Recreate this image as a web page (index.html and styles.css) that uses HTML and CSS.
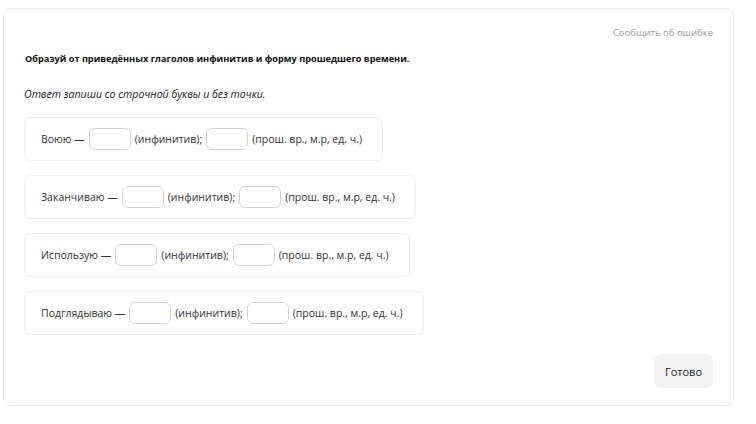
FILE: index.html
```html
<!DOCTYPE html>
<html lang="ru">
<head>
    <meta charset="UTF-8">
    <meta name="viewport" content="width=device-width, initial-scale=1.0">
    <title>Задание</title>
    <link rel="stylesheet" href="styles.css">
</head>
<body>
    <div class="card">
        <div class="report">Сообщить об ошибке</div>

        <div class="task">Образуй от приведённых глаголов инфинитив и форму прошедшего времени.</div>
        <div class="hint">Ответ запиши со строчной буквы и без точки.</div>

        <div class="rows">
            <div class="row">
                <span>Воюю —</span>
                <input type="text" class="field">
                <span>(инфинитив);</span>
                <input type="text" class="field">
                <span>(прош. вр., м.р, ед. ч.)</span>
            </div>
            <div class="row">
                <span>Заканчиваю —</span>
                <input type="text" class="field">
                <span>(инфинитив);</span>
                <input type="text" class="field">
                <span>(прош. вр., м.р, ед. ч.)</span>
            </div>
            <div class="row">
                <span>Использую —</span>
                <input type="text" class="field">
                <span>(инфинитив);</span>
                <input type="text" class="field">
                <span>(прош. вр., м.р, ед. ч.)</span>
            </div>
            <div class="row">
                <span>Подглядываю —</span>
                <input type="text" class="field">
                <span>(инфинитив);</span>
                <input type="text" class="field">
                <span>(прош. вр., м.р, ед. ч.)</span>
            </div>
        </div>

        <div class="actions">
            <button class="button">Готово</button>
        </div>
    </div>
</body>
</html>
```

FILE: styles.css
```css
html, body {
    margin: 0;
    padding: 0;
    background: #fff;
    font-family: "Open Sans", Arial, sans-serif;
    color: #222;
}

.card {
    box-sizing: border-box;
    width: 731px;
    height: 398px;
    margin: 8px 0 0 3px;
    padding: 17px 20px 17px 20px;
    border: 1px solid #ebebeb;
    border-radius: 8px;
    display: flex;
    flex-direction: column;
}

.report {
    align-self: flex-end;
    font-size: 9.5px;
    color: #9a9a9a;
    line-height: 14px;
}

.task {
    margin-top: 12px;
    margin-left: 1px;
    font-size: 9.2px;
    font-weight: bold;
    color: #111;
    line-height: 14px;
}

.hint {
    margin-top: 20px;
    font-size: 10.6px;
    font-style: italic;
    color: #222;
    line-height: 16px;
}

.rows {
    margin-top: 15px;
    display: flex;
    flex-direction: column;
    align-items: flex-start;
    gap: 14px;
}

.row {
    box-sizing: border-box;
    height: 44px;
    padding: 0 20px 0 16px;
    display: flex;
    align-items: center;
    gap: 4px;
    border: 1px solid #eeeeee;
    border-radius: 7px;
    font-size: 10.5px;
    color: #333;
}

.field {
    box-sizing: border-box;
    width: 42px;
    height: 22px;
    margin: 0;
    padding: 0 4px;
    border: 1px solid #d3d3d3;
    border-radius: 6px;
    background: #fff;
}

.actions {
    margin-top: auto;
    display: flex;
    justify-content: flex-end;
}

.button {
    width: 59px;
    height: 34px;
    border: none;
    border-radius: 7px;
    background-color: #f3f3f3;
    font-family: "Open Sans", Arial, sans-serif;
    font-size: 11px;
    color: #222;
    cursor: pointer;
}
```
